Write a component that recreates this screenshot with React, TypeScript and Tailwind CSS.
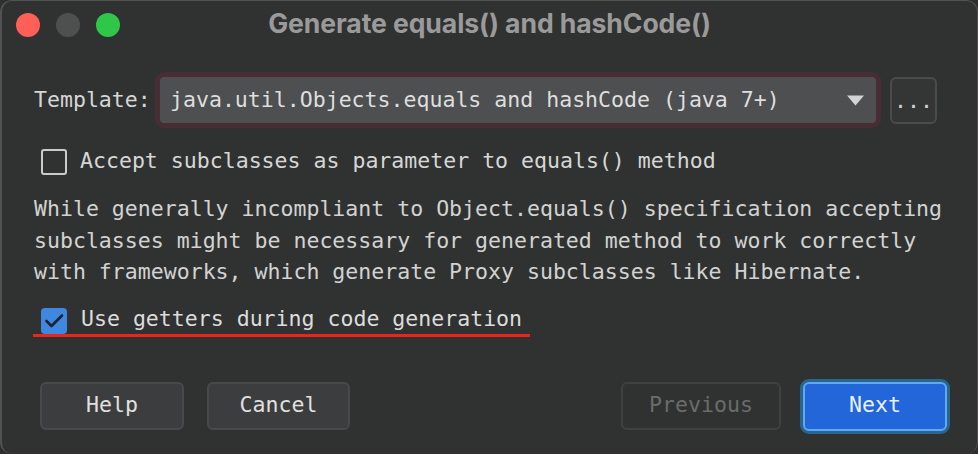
import React from "react";

const mono = "font-['DejaVu_Sans_Mono',monospace]";

export default function App() {
  return (
    <div className="w-[978px] h-[454px] bg-[#2e2f2f] overflow-hidden">
      <div
        className={`w-[978px] h-[454px] bg-[#303231] rounded-[12px] border-l-2 border-r border-t border-b-0 border-[#505151] flex flex-col ${mono} text-[21.55px] text-[#d6d6d6]`}
      >
        {/* title bar */}
        <div className="h-[47px] shrink-0 grid grid-cols-[1fr_auto_1fr] items-center">
          <div className="flex items-center gap-[16px] pl-[14px] pt-[1px]">
            <span className="w-[24px] h-[24px] rounded-full bg-[#fe5f57]" />
            <span className="w-[24px] h-[24px] rounded-full bg-[#4e504f]" />
            <span className="w-[24px] h-[24px] rounded-full bg-[#30c748]" />
          </div>
          <div className="font-['Inter',sans-serif] font-bold text-[26.6px] text-[#9a9a9a] tracking-[-0.1px] pb-[2px]">
            Generate equals() and hashCode()
          </div>
          <div />
        </div>

        {/* template row */}
        <div className="mt-[24px] flex items-center pl-[32px] pr-[40px]">
          <span className="w-[121px] leading-[26px]">Template:</span>
          <div className="w-[726px] h-[56px] border-[5px] border-[#482d35] rounded-[9px]">
            <div className="h-full bg-[#4d4f51] rounded-[4px] flex items-center pl-[10px] pr-[12px]">
              <span className="flex-1 leading-[26px] text-[#dedede]">
                java.util.Objects.equals and hashCode (java 7+)
              </span>
              <svg width="17" height="11" viewBox="0 0 17 11">
                <path d="M0 0.5 H17 L8.5 10.5 Z" fill="#d4d4d4" />
              </svg>
            </div>
          </div>
          <div className="ml-[9px] w-[47px] h-[47px] rounded-[6px] border-[2px] border-[#4a4b4c] bg-[#343535] flex items-center justify-center">
            <span className="leading-[20px] text-[#d0d0d0] pt-[1px]">...</span>
          </div>
        </div>

        {/* checkbox 1 */}
        <div className="mt-[21px] flex items-center pl-[39px] h-[26px]">
          <span className="w-[26px] h-[26px] rounded-[3px] border-[2px] border-[#cbcbcb]" />
          <span className="ml-[13px] leading-[26px] -mt-[3px]">
            Accept subclasses as parameter to equals() method
          </span>
        </div>

        {/* description */}
        <div className="mt-[18px] pl-[32px] leading-[31.5px] text-[#d2d2d2]">
          <div>While generally incompliant to Object.equals() specification accepting</div>
          <div>subclasses might be necessary for generated method to work correctly</div>
          <div>with frameworks, which generate Proxy subclasses like Hibernate.</div>
        </div>

        {/* checkbox 2 */}
        <div className="mt-[20px] flex items-center pl-[39px] h-[26px]">
          <span className="w-[26px] h-[26px] rounded-[4px] bg-[#3f88e0] flex items-center justify-center">
            <svg width="26" height="26" viewBox="0 0 26 26">
              <path
                d="M5.5 13 L10.5 18 L21 7.5"
                fill="none"
                stroke="#1a2430"
                strokeWidth="2.6"
                strokeLinecap="round"
                strokeLinejoin="round"
              />
            </svg>
          </span>
          <span className="ml-[14px] leading-[26px] -mt-[3px] text-[#dcdcdc]">
            Use getters during code generation
          </span>
        </div>
        <div className="ml-[31px] w-[497px] h-[3px] bg-[#ee2418]" />

        {/* buttons */}
        <div className="mt-[42px] flex items-center pl-[38px] pr-[27px]">
          <div className="w-[144px] h-[48px] rounded-[6px] border-[2px] border-[#48494a] bg-[#3c3d3e] flex items-center justify-center text-[#e0e0e0] pb-[2px]">
            Help
          </div>
          <div className="ml-[23px] w-[143px] h-[48px] rounded-[6px] border-[2px] border-[#48494a] bg-[#3c3d3e] flex items-center justify-center text-[#e0e0e0] pb-[2px]">
            Cancel
          </div>
          <div className="flex-1" />
          <div className="w-[160px] h-[48px] rounded-[6px] border-[2px] border-[#3f4040] flex items-center justify-center text-[#6a6b6b] pb-[2px]">
            Previous
          </div>
          <div className="ml-[19px] w-[150px] h-[55px] rounded-[9px] border-[3px] border-[#2a6590] bg-[#2a6590]">
            <div className="w-full h-full rounded-[6px] border-[2px] border-[#5da9f2] bg-[#2366d9] flex items-center justify-center text-[#e8f1ff] pb-[2px]">
              Next
            </div>
          </div>
        </div>
      </div>
    </div>
  );
}
